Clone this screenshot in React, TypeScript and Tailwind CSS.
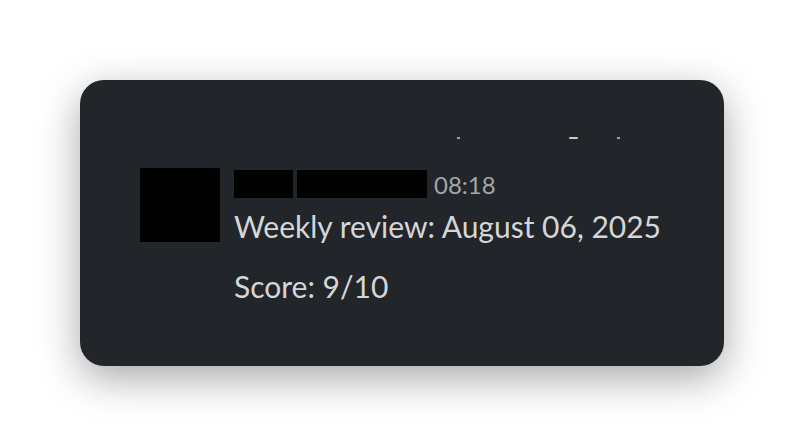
import React from "react";

export default function App() {
  return (
    <div className="w-[804px] h-[446px] bg-white flex items-start justify-center pt-[80px]" style={{ fontFamily: "Lato, 'Noto Sans', sans-serif" }}>
      <div className="w-[644px] h-[286px] rounded-[24px] bg-[#222529] shadow-[0_12px_40px_rgba(0,0,0,0.35)] overflow-hidden flex flex-col">
        <div className="h-[59px] shrink-0 flex items-end">
          <div className="flex items-end h-[2px] w-full">
            <div className="ml-[377px] w-[3px] h-[2px] bg-[#9aa0a6]" />
            <div className="ml-[109px] w-[9px] h-[2px] bg-[#c8cacc] rounded-full" />
            <div className="ml-[39px] w-[3px] h-[2px] bg-[#9aa0a6]" />
          </div>
        </div>
        <div className="flex pl-[60px] pt-[29px]">
          <div className="w-[80px] h-[74px] bg-black shrink-0" />
          <div className="ml-[14px] flex flex-col pt-[2px]">
            <div className="flex items-start h-[28px]">
              <div className="w-[59px] h-[28px] bg-black" />
              <div className="ml-[4px] w-[130px] h-[28px] bg-black" />
              <span className="ml-[7px] text-[24px] text-[#a3a6aa] leading-[28px] mt-[1px]">08:18</span>
            </div>
            <div className="text-[30px] leading-[36px] text-[#d4d6d8] mt-[10px]">Weekly review: August 06, 2025</div>
            <div className="text-[30px] leading-[36px] text-[#d4d6d8] mt-[24px]">Score: 9/10</div>
          </div>
        </div>
      </div>
    </div>
  );
}
